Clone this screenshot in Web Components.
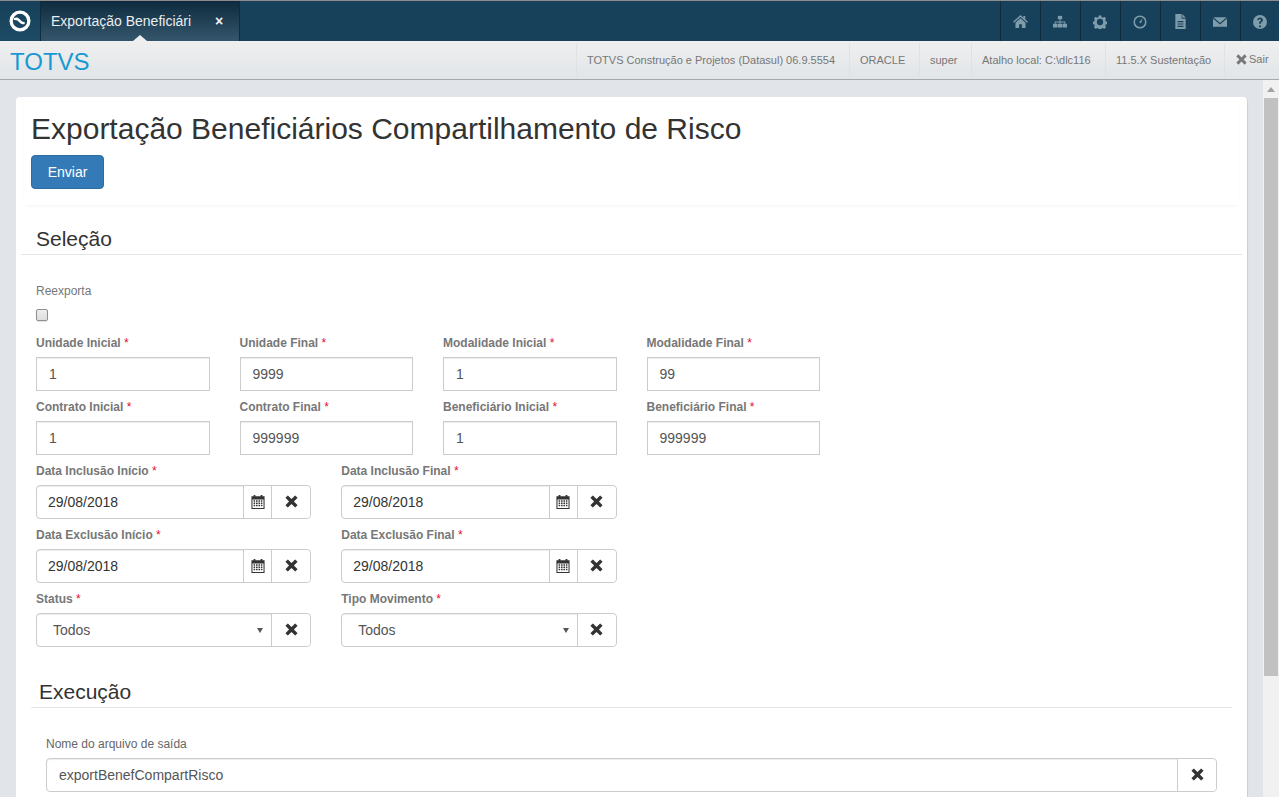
<!DOCTYPE html>
<html lang="pt-BR">
<head>
<meta charset="utf-8">
<title>Exportação Beneficiários Compartilhamento de Risco</title>
<style>
  html, body { margin: 0; height: 100%; overflow: hidden; }
  body { font-family: "Liberation Sans", Arial, sans-serif; background: #e1e5e9; }
  app-shell { height: 797px; }
</style>
</head>
<body>
<app-shell>
  <top-bar slot="top" tab="Exportação Beneficiári"></top-bar>
  <sub-bar slot="top">
    <info-item width="273">TOTVS Construção e Projetos (Datasul) 06.9.5554</info-item>
    <info-item width="70">ORACLE</info-item>
    <info-item width="52">super</info-item>
    <info-item width="134">Atalho local: C:\dlc116</info-item>
    <info-item width="119">11.5.X Sustentação</info-item>
    <info-item width="55" exit>Sair</info-item>
  </sub-bar>

  <page-card>
    <page-head title="Exportação Beneficiários Compartilhamento de Risco" action="Enviar"></page-head>

    <form-section title="Seleção">
      <check-field label="Reexporta"></check-field>
      <form-field span="2" label="Unidade Inicial" required>1</form-field>
      <form-field span="2" label="Unidade Final" required>9999</form-field>
      <form-field span="2" label="Modalidade Inicial" required>1</form-field>
      <form-field span="2" label="Modalidade Final" required>99</form-field>
      <form-field span="2" label="Contrato Inicial" required newrow>1</form-field>
      <form-field span="2" label="Contrato Final" required>999999</form-field>
      <form-field span="2" label="Beneficiário Inicial" required>1</form-field>
      <form-field span="2" label="Beneficiário Final" required>999999</form-field>
      <form-field span="3" kind="date" label="Data Inclusão Início" required newrow>29/08/2018</form-field>
      <form-field span="3" kind="date" label="Data Inclusão Final" required>29/08/2018</form-field>
      <form-field span="3" kind="date" label="Data Exclusão Início" required newrow>29/08/2018</form-field>
      <form-field span="3" kind="date" label="Data Exclusão Final" required>29/08/2018</form-field>
      <form-field span="3" kind="select" label="Status" required newrow>Todos</form-field>
      <form-field span="3" kind="select" label="Tipo Movimento" required>Todos</form-field>
    </form-section>

    <form-section title="Execução" inner>
      <form-field span="12" kind="clear" label="Nome do arquivo de saída" plain>exportBenefCompartRisco</form-field>
    </form-section>
  </page-card>
</app-shell>

<script>
(function() {
  // icons shared by the bars and the fields
  const icons = {
    home: '<path d="M8 1 0 8.200l1 1.100L8 3.200l7 6.100 1-1.100-3-2.600V2h-2v2z"/><path d="M8 4.600 2.600 9.300V15H6.500v-4h3v4h3.900V9.300z"/>',
    sitemap: '<path d="M5.500 1h5v4h-5z"/><path d="M7.400 5h1.200v2.400H14V10h-1.200V8.600H8.600V10H7.400V8.600H3.200V10H2V7.400h5.400z"/><path d="M0 10h5v4.400H0zM5.500 10h5v4.400h-5zM11 10h5v4.400h-5z"/>',
    cog: '<path fill-rule="evenodd" d="M6.500.5h3l.4 2 1.300.5 1.700-1.100 2.100 2.100-1.100 1.700.5 1.300 2 .4v3l-2 .4-.5 1.300 1.100 1.700-2.100 2.100-1.700-1.100-1.300.5-.4 2h-3l-.4-2-1.300-.5-1.700 1.100-2.100-2.100 1.100-1.700-.5-1.300-2-.4v-3l2-.4.5-1.300-1.100-1.700 2.100-2.100 1.700 1.100 1.300-.5zM8 4.400a3.600 3.600 0 1 0 0 7.200 3.600 3.600 0 0 0 0-7.200z"/>',
    clock: '<path fill-rule="evenodd" d="M8 .5a7.500 7.500 0 1 0 0 15 7.500 7.500 0 0 0 0-15zm0 1.800a5.700 5.700 0 1 1 0 11.400 5.700 5.700 0 0 1 0-11.400z"/><path d="M11 3.600 9.200 9.400 6.900 8.400z"/>',
    file: '<path fill-rule="evenodd" d="M2.500 0H9.200v5H13.500v11H2.500zM4.800 7.500v1.300h6.400V7.500zM4.800 10v1.300h6.400V10zm0 2.500v1.300h6.400v-1.300z"/><path d="M10 0l3.500 4H10z"/>',
    mail: '<path d="M.5 2.500h15L8 9z"/><path d="M0 4l8 6.800L16 4v9.500H0z"/>',
    help: '<path fill-rule="evenodd" d="M8 0a8 8 0 1 0 0 16A8 8 0 0 0 8 0zM7 12h2.200v2H7zM4.800 5.600C5 3.800 6.300 2.800 8.100 2.800c1.900 0 3.200 1.100 3.200 2.800 0 1.300-.7 1.900-1.400 2.500-.6.500-.8.800-.8 1.500v.5H7v-.7c0-1.100.4-1.700 1.100-2.300.6-.5.900-.8.900-1.400 0-.6-.4-1-1-1s-1 .400-1.100 1.100z"/>',
    remove: '<path d="M3.500.5 8 5l4.500-4.500 3 3L11 8l4.500 4.500-3 3L8 11l-4.500 4.500-3-3L5 8 .5 3.500z"/>',
    calendar: '<path fill-rule="evenodd" d="M3 0h2v1.500h6V0h2v1.500h2.500V16H.5V1.500H3zM1.700 5v9.800h12.600V5zM3 6h1.700v1.600H3zM5.700 6h1.800v1.600H5.700zM8.500 6h1.800v1.600H8.500zM11.300 6H13v1.600h-1.700zM3 8.600h1.700v1.600H3zM5.700 8.600h1.800v1.600H5.700zM8.500 8.600h1.800v1.600H8.500zM11.300 8.600H13v1.600h-1.700zM3 11.200h1.700v1.600H3zM5.700 11.200h1.800v1.600H5.700zM8.500 11.200h1.800v1.600H8.500zM11.300 11.200H13v1.600h-1.700z"/>'
  };

  function icon(name, size) {
    return `<svg width="${size}" height="${size}" viewBox="0 0 16 16" fill="currentColor" aria-hidden="true">${icons[name]}</svg>`;
  }

  class AppShell extends HTMLElement {
    constructor() {
      super();
      this.attachShadow({ mode: "open" });
      this.shadowRoot.innerHTML = `
      <style>
        :host { display: flex; flex-direction: column; }
        .body { flex: 1; min-height: 0; display: flex; }
        .view { flex: 1; min-width: 0; overflow: hidden; padding: 17px 16px 0 16px; }
        .scroll { width: 16px; background: #f1f1f1; display: flex; flex-direction: column; align-items: center; }
        .arrow { height: 18px; display: flex; align-items: center; justify-content: center; }
        .arrow::before { content: ""; border: 4px solid transparent; border-top: 0; border-bottom: 5px solid #a3a3a3; }
        .thumb { width: 14px; height: 578px; background: #c1c1c1; }
      </style>
      <slot name="top"></slot>
      <div class="body">
        <div class="view"><slot></slot></div>
        <div class="scroll"><div class="arrow"></div><div class="thumb"></div></div>
      </div>`;
    }
  }

  class TopBar extends HTMLElement {
    constructor() {
      super();
      this.attachShadow({ mode: "open" });
      const sizes = { home: 15, file: 15 };
      const tools = ["home", "sitemap", "cog", "clock", "file", "mail", "help"]
        .map(n => `<a class="tool">${icon(n, sizes[n] || 14)}</a>`).join("");
      this.shadowRoot.innerHTML = `
      <style>
        :host { display: flex; height: 40px; border-top: 1px solid #8c8c8c; background: #17415a; color: #fff; font-size: 14px; }
        .logo { width: 40px; display: flex; align-items: center; justify-content: center; border-right: 1px solid #0f2c3f;
          background: linear-gradient(#17415a, #1d4a64); }
        .tab { position: relative; width: 199px; display: flex; align-items: center; box-sizing: border-box; padding-left: 10px;
          border-right: 1px solid #0f2c3f;
          background: linear-gradient(#0e2b3e, #34566c); }
        .tab::after { content: ""; position: absolute; left: 92px; bottom: 0; border: 7px solid transparent; border-top: 0; border-bottom: 6px solid #eeeff0; }
        .name { width: 162px; white-space: nowrap; overflow: hidden; color: #e9eef1; }
        .close { font-size: 14px; font-weight: 700; color: #eef2f4; margin-left: 2px; }
        .grow { flex: 1; }
        .tool { width: 38px; padding: 1px 1px 0 0; display: flex; align-items: center; justify-content: center; border-left: 1px solid #0f2c3f; color: #7f9cab; }
        .tool:last-child { width: 37px; }
      </style>
      <div class="logo">
        <svg width="22" height="22" viewBox="0 0 22 22" aria-hidden="true">
          <path fill="#fff" fill-rule="evenodd" d="M11 .5a10.500 10.500 0 1 0 0 21 10.500 10.500 0 0 0 0-21zm0 3.300a7.200 7.200 0 1 1 0 14.400 7.200 7.200 0 0 1 0-14.400z"/>
          <path fill="#fff" d="M5.200 8c2-1 3.900-.6 5.400 1.100 1.100 1.300 2.300 2.800 5.200 3.200.2.800 0 1.400-.5 2-2.300.1-3.900-.7-5.300-2.400C9 10.600 7.600 9.700 4.900 10c-.2-.7-.1-1.400.3-2z"/>
        </svg>
      </div>
      <div class="tab"><span class="name">${this.getAttribute("tab")}</span><span class="close">×</span></div>
      <div class="grow"></div>
      ${tools}`;
    }
  }

  class SubBar extends HTMLElement {
    constructor() {
      super();
      this.attachShadow({ mode: "open" });
      this.shadowRoot.innerHTML = `
      <style>
        :host { display: flex; height: 38px; box-sizing: content-box; border-bottom: 1px solid #a9a9a9;
          background: linear-gradient(#efefef, #e1e5e9); align-items: stretch; }
        .brand { flex: 1; font-size: 24px; line-height: 41px; padding-left: 10px; color: #1a98d1; }
        .items { display: flex; padding-top: 3px; }
      </style>
      <div class="brand">TOTVS</div>
      <div class="items"><slot></slot></div>`;
    }
  }

  class InfoItem extends HTMLElement {
    constructor() {
      super();
      this.attachShadow({ mode: "open" });
      const mark = this.hasAttribute("exit") ? icon("remove", 11) : "";
      this.shadowRoot.innerHTML = `
      <style>
        :host { display: flex; align-items: center; gap: 2px; box-sizing: border-box; width: ${this.getAttribute("width")}px; padding: 0 0 2px 10px;
          height: 33px; font-size: 11px; color: #777; white-space: nowrap; border-left: 1px solid #dfe1e3; }
        :host([exit]) { padding: 0 0 3px 11px; }
      </style>
      ${mark}<slot></slot>`;
    }
  }

  class PageCard extends HTMLElement {
    constructor() {
      super();
      this.attachShadow({ mode: "open" });
      this.shadowRoot.innerHTML = `
      <style>
        :host { display: block; background: #fff; border-radius: 4px; padding: 0 5px 40px; height: 760px;
          box-shadow: 1px 1px 1px #c9ced3; }
      </style>
      <slot></slot>`;
    }
  }

  class PageHead extends HTMLElement {
    constructor() {
      super();
      this.attachShadow({ mode: "open" });
      this.shadowRoot.innerHTML = `
      <style>
        :host { display: block; margin: 0 3px; padding: 13px 7px 16px; box-shadow: 0 2px 4px -2px rgba(0,0,0,.08); }
        h1 { margin: 0 0 8px; font-size: 30px; font-weight: 400; line-height: 37px; color: #333; }
        button { display: block; width: 73px; height: 34px; padding: 0; background: #337ab7; border: 1px solid #2e6da4; border-radius: 4px;
          color: #fff; font: 14px "Liberation Sans", Arial, sans-serif; }
      </style>
      <h1>${this.getAttribute("title")}</h1>
      <button type="button">${this.getAttribute("action")}</button>`;
    }
  }

  class FormSection extends HTMLElement {
    constructor() {
      super();
      this.attachShadow({ mode: "open" });
      this.shadowRoot.innerHTML = `
      <style>
        :host { display: block; margin: 19px 0 0; }
        :host([inner]) { margin: 22px 10px 0; }
        h2 { margin: 0; padding: 1px 15px 2px; height: 27px; font-size: 21px; font-weight: 400; line-height: 27px; color: #333; border-bottom: 1px solid #e5e5e5; }
        :host([inner]) h2 { padding: 1px 8px 2px; }
        .row { display: grid; grid-template-columns: repeat(12, minmax(0, 1fr)); padding-top: 28px; }
      </style>
      <h2>${this.getAttribute("title")}</h2>
      <div class="row"><slot></slot></div>`;
    }
  }

  class CheckField extends HTMLElement {
    constructor() {
      super();
      this.attachShadow({ mode: "open" });
      this.shadowRoot.innerHTML = `
      <style>
        :host { display: block; grid-column: 1 / -1; padding: 0 15px; font-size: 12px; color: #777; }
        .label { line-height: 17px; height: 17px; }
        .box { display: block; width: 12px; height: 12px; margin-top: 9px; margin-bottom: 14px; box-sizing: border-box; border: 1px solid #8f8f8f; border-radius: 2px;
          background: linear-gradient(#ededed, #dedede); box-shadow: 0 1px 1px rgba(0,0,0,.12); }
      </style>
      <div class="label">${this.getAttribute("label")}</div>
      <span class="box"></span>`;
    }
  }

  class FormField extends HTMLElement {
    constructor() {
      super();
      this.attachShadow({ mode: "open" });
      const kind = this.getAttribute("kind") || "text";
      const span = this.getAttribute("span") || 2;
      const star = this.hasAttribute("required") ? ' <span class="req">*</span>' : "";
      const addons = [];
      if (kind === "date") addons.push(`<span class="addon cal">${icon("calendar", 14)}</span>`);
      if (kind !== "text") addons.push(`<span class="addon x">${icon("remove", 13)}</span>`);
      const caret = kind === "select" ? '<span class="caret"></span>' : "";
      this.shadowRoot.innerHTML = `
      <style>
        :host { display: block; grid-column: span ${span}; padding: 0 15px 8px; min-width: 0; }
        :host([newrow]) { grid-column: 1 / span ${span}; }
        .label { height: 17px; line-height: 17px; margin-bottom: 5px; font-size: 12px; font-weight: 700; color: #777; white-space: nowrap; }
        :host([plain]) .label { font-weight: 400; color: #666; }
        .req { color: #e0102f; font-weight: 400; }
        .group { display: flex; height: 34px; box-sizing: border-box; border: 1px solid #ccc; border-radius: ${kind === "text" ? 0 : 4}px;
          box-shadow: inset 0 1px 1px rgba(0,0,0,.075); background: #fff; font-size: 14px; color: #555; }
        .value { flex: 1; min-width: 0; display: flex; align-items: center; padding-left: 12px; }
        :host([kind="date"]) .value { padding-left: 11px; color: #333; }
        :host([kind="select"]) .value { padding-left: 16px; }
        .caret { align-self: center; margin-right: 8px; border: 3px solid transparent; border-bottom: 0; border-top: 5px solid #555; }
        .addon { width: 38px; flex: none; display: flex; align-items: center; justify-content: center; border-left: 1px solid #ccc; color: #333; background: #fff; border-radius: 0 4px 4px 0; }
        .addon.x svg { margin-top: -2px; }
        .addon.cal { width: 27px; border-radius: 0; }
      </style>
      <div class="label">${this.getAttribute("label")}${star}</div>
      <div class="group"><span class="value"><slot></slot></span>${caret}${addons.join("")}</div>`;
    }
  }

  customElements.define("app-shell", AppShell);
  customElements.define("top-bar", TopBar);
  customElements.define("sub-bar", SubBar);
  customElements.define("info-item", InfoItem);
  customElements.define("page-card", PageCard);
  customElements.define("page-head", PageHead);
  customElements.define("form-section", FormSection);
  customElements.define("check-field", CheckField);
  customElements.define("form-field", FormField);
})();
</script>
</body>
</html>
